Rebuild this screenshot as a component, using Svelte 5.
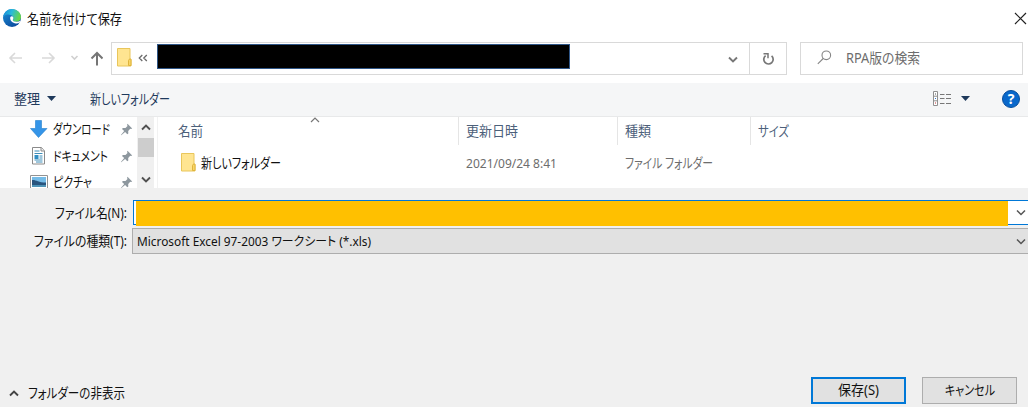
<script>
  let sidebar = [
    { icon: 'download', name: 'ダウンロード', width: 57 },
    { icon: 'document', name: 'ドキュメント', width: 55 },
    { icon: 'picture', name: 'ピクチャ', width: 39 }
  ];

  let columns = [
    { name: '名前', width: 25, cls: 'name' },
    { name: '更新日時', width: 52, cls: 'date' },
    { name: '種類', width: 26, cls: 'type' },
    { name: 'サイズ', width: 31, cls: 'size' }
  ];

  let fileType = 'Microsoft Excel 97-2003 ワークシート (*.xls)';
</script>

<!-- condensed label, fitted to the given width -->
{#snippet label(text, width)}
  <svg class="label" {width} height="20">
    <text x="0" y="14.5" textLength={width} lengthAdjust="spacingAndGlyphs">{text}</text>
  </svg>
{/snippet}

{#snippet folder()}
  <svg class="folder" width="15" height="19" viewBox="0 0 15 19">
    <path d="M.5 .5h12.500v11h1v6.500H.5z" fill="#ffe591" stroke="#e9c65b" />
    <path d="M11.500 17.500v-5l1-1.500h1.500v6.500z" fill="#f8d568" stroke="#dfb43c" />
  </svg>
{/snippet}

{#snippet chevron(color, up, weight = 1.9)}
  <svg width="10" height="7" viewBox="0 0 10 7">
    <path d={up ? 'M1 5.500L5 1.500l4 4' : 'M1 1.500l4 4 4-4'} fill="none" stroke={color} stroke-width={weight} />
  </svg>
{/snippet}

<div class="dialog">
  <header class="title-bar">
    <svg class="edge" width="18" height="18" viewBox="0 0 18 18">
      <defs>
        <linearGradient id="edgeTop" x1="0" y1="0" x2="1" y2=".3">
          <stop offset="0" stop-color="#1687d6" />
          <stop offset=".5" stop-color="#29b9dc" />
          <stop offset="1" stop-color="#65d64b" />
        </linearGradient>
        <linearGradient id="edgeSide" x1="0" y1="0" x2=".7" y2="1">
          <stop offset="0" stop-color="#1b91d8" />
          <stop offset="1" stop-color="#0b4a9d" />
        </linearGradient>
      </defs>
      <circle cx="9" cy="9" r="9" fill="url(#edgeSide)" />
      <path d="M.3 7.500C1.200 3 4.600 0 9 0c5 0 9 3.700 9 8 0 3-2.200 4.700-5 4.700-2.300 0-3.500-.8-3.200-1.700.8-1 .9-2 .5-3C9 5.200 3.400 4.200.3 7.500z" fill="url(#edgeTop)" />
      <path d="M7.200 8.300C7.700 7 9.700 6.800 10.300 8.200c.5 1.300-.5 2.200-.5 2.900 0 1 1.700 1.900 4.200 1.600 1.300-.1 2.400-.5 3.200-1l.3.700-1.300 1.300c-1.100.7-2.200.8-3.200.7-3.500-.2-6.200-2.500-5.800-6.100z" fill="#fff" />
    </svg>
    {@render label('名前を付けて保存', 95)}
    <svg class="close" width="13" height="13" viewBox="0 0 13 13">
      <path d="M1 1l11 11M12 1L1 12" stroke="#222" stroke-width="1.200" />
    </svg>
  </header>

  <nav class="nav-bar">
    <div class="arrows">
      <svg width="103" height="18" viewBox="0 0 103 18" fill="none">
        <path d="M22 9H10M15 4L10 9l5 5M42 9h12M49 4l5 5-5 5" stroke="#d9d9d9" stroke-width="1.600" />
        <path d="M71.500 7l3 3 3-3" stroke="#d0d0d0" stroke-width="1.600" />
        <path d="M97 16.500V4M91.500 9.500L97 4l5.500 5.500" stroke="#757575" stroke-width="2" />
      </svg>
    </div>
    <div class="address">
      {@render folder()}
      <svg class="crumbs" width="10" height="8" viewBox="0 0 10 8">
        <path d="M4.300 1L1.300 4l3 3M8.800 1l-3 3 3 3" fill="none" stroke="#6a6a6a" stroke-width="1.300" />
      </svg>
      <div class="path"></div>
      <span class="drop">{@render chevron('#777', false)}</span>
      <button class="refresh" aria-label="更新">
        <svg width="13" height="14" viewBox="0 0 13 14" fill="none" stroke="#777">
          <path d="M9.600 3.800a4.700 4.700 0 1 1-6-.2" stroke-width="1.700" />
          <path d="M1.500 1.700h4.500v4.500" stroke-width="1.500" />
        </svg>
      </button>
    </div>
    <div class="search">
      <svg width="15" height="15" viewBox="0 0 15 15" fill="none" stroke="#858585" stroke-width="1.100">
        <circle cx="9.300" cy="5.300" r="4.300" />
        <path d="M6.200 8.500L.8 13.800" />
      </svg>
      {@render label('RPA版の検索', 74)}
    </div>
  </nav>

  <div class="toolbar">
    {@render label('整理', 26)}
    <svg class="caret" width="9" height="5"><path d="M0 0h9L4.500 5z" fill="#1e395b" /></svg>
    <span class="new-folder">{@render label('新しいフォルダー', 80)}</span>
    <svg class="view" width="19" height="16" viewBox="0 0 19 16">
      <path d="M.5.5h4v14h-4zM.5 5.200h4M.5 9.800h4" fill="#fff" stroke="#909090" />
      <path d="M7 3.500h4.500M13 3.500h5M7 7.500h4.500M13 7.500h5M7 12.500h4.500M13 12.500h5" stroke="#777" />
      <path d="M2 3h1" stroke="#555" /><path d="M2 7.500h1" stroke="#3478d0" /><path d="M2 12h1" stroke="#c33" />
    </svg>
    <svg class="view-caret" width="9" height="5"><path d="M0 0h9L4.500 5z" fill="#1e395b" /></svg>
    <span class="help">?</span>
  </div>

  <main class="browser">
    <ul class="tree">
      {#each sidebar as item}
        <li>
          <svg width="18" height="18" viewBox="0 0 18 18">
            {#if item.icon === 'download'}
              <path d="M5.500.5h6v8H17L8.500 17.500 0.500 8.500h5z" fill="#3595e8" stroke="#2480cd" stroke-width=".6" />
            {:else if item.icon === 'document'}
              <path d="M2.500.5h9l3 3.500v13h-12z" fill="#fff" stroke="#8a8a8a" />
              <path d="M11 .5V4h3.500" fill="#eee" stroke="#8a8a8a" />
              <path d="M4.500 4h5M4.500 6.500h8M9.500 9h3M9.500 11h3M4.500 13h8M6 15h6.500" stroke="#3f8eb9" />
              <path d="M4.500 8h4v4h-4z" fill="#328fc4" />
            {:else}
              <path d="M.5 2.500h17v13H.5z" fill="#fff" stroke="#929292" />
              <path d="M2 4h14v10H2z" fill="#75bce8" />
              <path d="M2 7c4-.5 6 2.500 14 2.500V14H2z" fill="#28547e" />
              <path d="M2 12h14v2H2z" fill="#4e93b7" />
            {/if}
          </svg>
          {@render label(item.name, item.width)}
          <svg class="pin" width="13" height="13" viewBox="0 0 13 13">
            <path d="M7.500.8l4.700 4.600-1.200.5-.8-.2-2 2.200.1 2.600-1 .7-2.200-2.200-3.900 3.200-.3-.3 3.300-3.800L2 6l.8-1 2.700.1 2-2.200-.4-1.100z" fill="#8d979e" />
          </svg>
        </li>
      {/each}
    </ul>
    <div class="scrollbar">
      {@render chevron('#505050', true)}
      <div class="thumb"></div>
      {@render chevron('#505050', false)}
    </div>
    <section class="files">
      <div class="columns">
        {#each columns as col}
          <div class="col {col.cls}">{@render label(col.name, col.width)}</div>
        {/each}
        <svg class="sort" width="10" height="6"><path d="M1 5l4-4 4 4" fill="none" stroke="#777" stroke-width="1.200" /></svg>
      </div>
      <div class="file">
        <div class="col name">{@render folder()}{@render label('新しいフォルダー', 80)}</div>
        <div class="col date">{@render label('2021/09/24 8:41', 91)}</div>
        <div class="col type">{@render label('ファイル フォルダー', 88)}</div>
      </div>
    </section>
  </main>

  <section class="fields">
    <div class="field">
      <span class="caption">{@render label('ファイル名(N):', 72)}</span>
      <div class="combo filename">
        <div class="fill"></div>
        {@render chevron('#555', false, 1.5)}
      </div>
    </div>
    <div class="field">
      <span class="caption">{@render label('ファイルの種類(T):', 93)}</span>
      <div class="combo filetype">
        {@render label(fileType, 234)}
        {@render chevron('#555', false, 1.5)}
      </div>
    </div>
  </section>

  <footer>
    <div class="toggle">
      {@render chevron('#444', true)}
      {@render label('フォルダーの非表示', 97)}
    </div>
    <button class="save">{@render label('保存(S)', 41)}</button>
    <button class="cancel">{@render label('キャンセル', 50)}</button>
  </footer>
</div>

<style>
  :global(body) {
    margin: 0;
    overflow: hidden;
  }

  .dialog {
    width: 1028px;
    height: 407px;
    display: flex;
    flex-direction: column;
    overflow: hidden;
    background: #fff;
    color: #111;
    font-family: "Noto Sans", "Noto Sans CJK JP", sans-serif;
    font-size: 13.5px;
  }

  .dialog * {
    box-sizing: border-box;
  }

  svg {
    display: block;
    flex: none;
  }

  .label {
    overflow: visible;
    fill: currentColor;
    font-feature-settings: "palt";
  }

  button {
    padding: 0;
    color: inherit;
    font: inherit;
    border-radius: 0;
  }

  /* title */
  .title-bar {
    height: 42px;
    display: flex;
    align-items: flex-start;
    padding: 9px 2px 0 3px;
  }

  .edge {
    margin-right: 6px;
  }

  .close {
    margin: 3px -1px 0 auto;
  }

  /* navigation */
  .nav-bar {
    height: 41px;
    display: flex;
    align-items: flex-start;
  }

  .arrows {
    width: 111px;
    padding-top: 7px;
  }

  .address {
    width: 676px;
    height: 33px;
    display: flex;
    align-items: center;
    border: 1px solid #d9d9d9;
    padding-left: 5px;
  }

  .address .folder {
    margin-top: -2px;
  }

  .crumbs {
    margin: -2px 0 0 6px;
  }

  .path {
    width: 413px;
    height: 25px;
    margin: -4px 0 0 9px;
    background: #000;
    border: 1px solid #2f5687;
  }

  .drop {
    margin: 2px 0 0 auto;
    padding-right: 11px;
  }

  .refresh {
    width: 37px;
    height: 31px;
    display: flex;
    align-items: center;
    justify-content: center;
    padding-left: 1px;
    background: none;
    border: 0;
    border-left: 1px solid #d9d9d9;
  }

  .search {
    width: 223px;
    height: 33px;
    margin-left: 13px;
    padding: 0 0 2px 16px;
    display: flex;
    align-items: center;
    gap: 14px;
    border: 1px solid #d9d9d9;
    color: #6d6d6d;
  }

  /* toolbar */
  .toolbar {
    height: 34px;
    display: flex;
    align-items: center;
    padding: 0 8px 2px 14px;
    background: #f5f6f7;
    border-bottom: 1px solid #e8e9ea;
    color: #1e395b;
  }

  .caret {
    margin-left: 7px;
  }

  .new-folder {
    margin-left: 34px;
  }

  .view {
    margin-left: auto;
  }

  .view-caret {
    margin: 0 32px 0 9px;
  }

  .help {
    width: 18px;
    height: 18px;
    margin-top: 1px;
    border-radius: 50%;
    border: 1px solid #074e9d;
    background: #0968cb;
    color: #fff;
    font-weight: bold;
    font-size: 14px;
    line-height: 16px;
    text-align: center;
  }

  /* files */
  .browser {
    height: 71px;
    display: flex;
    overflow: hidden;
  }

  .tree {
    width: 137px;
    margin: -1px 0 0;
    padding: 0 4px 0 30px;
    list-style: none;
  }

  .tree li {
    height: 26.5px;
    display: flex;
    align-items: center;
  }

  .tree .label {
    margin: 0 0 0 5px;
  }

  .tree li .pin {
    margin: 1px 0 0 auto;
  }

  .scrollbar {
    width: 17px;
    padding: 7px 0 5px;
    display: flex;
    flex-direction: column;
    align-items: center;
    background: #f0f0f0;
  }

  .thumb {
    width: 16px;
    height: 19px;
    margin: 7px 0 auto;
    background: #cdcdcd;
  }

  .files {
    flex: 1;
    margin-left: 3px;
    border-left: 1px solid #f2f2f2;
  }

  .columns {
    height: 28px;
    position: relative;
    display: flex;
    color: #4c607a;
  }

  .col {
    display: flex;
    align-items: center;
    padding-left: 7px;
  }

  .columns .col {
    border-right: 1px solid #e5e5e5;
  }

  .columns .size {
    border: 0;
  }

  .name {
    width: 301px;
    padding-left: 20px;
  }

  .date {
    width: 159px;
  }

  .type {
    width: 133px;
  }

  .sort {
    position: absolute;
    left: 152px;
    top: 0;
  }

  .file {
    height: 36px;
    display: flex;
    color: #6d6d6d;
  }

  .file .name {
    color: #111;
    padding-left: 23px;
    gap: 5px;
  }

  .file .folder {
    margin-top: -1px;
  }

  .file .date {
    font-size: 12.5px;
  }

  /* file name and type */
  .fields {
    height: 66px;
    padding-top: 12px;
    display: flex;
    flex-direction: column;
    gap: 2px;
    background: #f0f0f0;
  }

  .field {
    height: 26px;
    display: flex;
    align-items: center;
  }

  .caption {
    width: 132px;
    padding-right: 5px;
    display: flex;
    justify-content: flex-end;
  }

  .combo {
    flex: 1;
    height: 26px;
    display: flex;
    align-items: center;
    justify-content: space-between;
    padding-right: 2px;
  }

  .filename {
    height: 25px;
    align-self: flex-start;
    border: 1px solid #0078d7;
    border-right: 0;
    background: #fff;
    margin-left: 1px;
  }

  .fill {
    width: 872px;
    height: 25px;
    align-self: flex-start;
    margin-left: 2px;
    background: #ffc000;
  }

  .filetype {
    border: 1px solid #adadad;
    border-right: 0;
    background: #e1e1e1;
    padding-left: 4px;
    font-size: 12.5px;
  }

  /* buttons */
  footer {
    flex: 1;
    display: flex;
    align-items: flex-end;
    padding: 0 11px 3px 9px;
    background: #f0f0f0;
  }

  .toggle {
    display: flex;
    align-items: center;
    gap: 9px;
    margin: 0 auto 1px 0;
  }

  footer button {
    width: 95px;
    height: 27px;
    display: flex;
    align-items: center;
    justify-content: center;
    padding-bottom: 2px;
    background: #e1e1e1;
    border: 1px solid #adadad;
  }

  footer .save {
    border: 2px solid #0078d7;
    margin-right: 16px;
  }
</style>
